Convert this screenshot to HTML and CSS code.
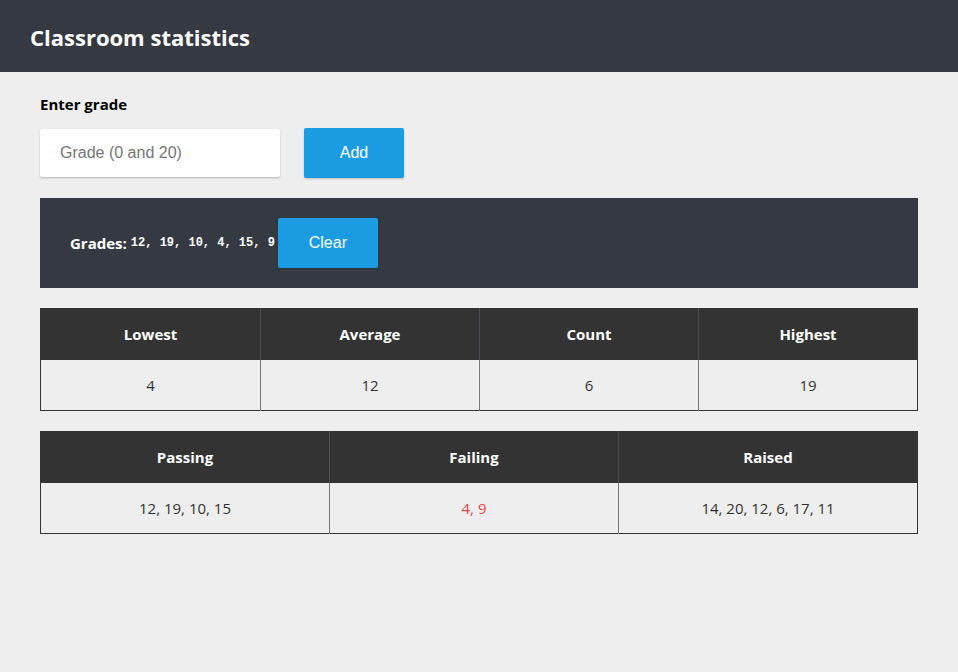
FILE: index.html
```html
<!DOCTYPE html>
<html lang="en">
<head>
<meta charset="utf-8">
<title>Classroom statistics</title>
<link rel="stylesheet" href="styles.css">
</head>
<body>
<header class="topbar">
  <h1 class="title">Classroom statistics</h1>
</header>
<main class="content">
  <label class="field-label" for="grade">Enter grade</label>
  <div class="entry-row">
    <input id="grade" class="grade-input" type="text" placeholder="Grade (0 and 20)">
    <button class="btn">Add</button>
  </div>
  <section class="grades-panel">
    <span class="grades-label">Grades:</span>
    <code class="grades-list">12, 19, 10, 4, 15, 9</code>
    <button class="btn">Clear</button>
  </section>
  <table class="stats">
    <thead>
      <tr><th class="q-wide">Lowest</th><th class="q-mid">Average</th><th class="q-mid">Count</th><th>Highest</th></tr>
    </thead>
    <tbody>
      <tr><td>4</td><td>12</td><td>6</td><td>19</td></tr>
    </tbody>
  </table>
  <table class="stats">
    <thead>
      <tr><th class="third">Passing</th><th class="third">Failing</th><th>Raised</th></tr>
    </thead>
    <tbody>
      <tr><td>12, 19, 10, 15</td><td class="failing">4, 9</td><td>14, 20, 12, 6, 17, 11</td></tr>
    </tbody>
  </table>
</main>
</body>
</html>
```
FILE: styles.css
```css
* { box-sizing: border-box; }
html, body { margin: 0; }
body {
  background: #eeeeee;
  font-family: "Open Sans", "Noto Sans", sans-serif;
  color: #333;
  font-size: 15px;
}
.topbar {
  height: 72px;
  background: #353a42;
  display: flex;
  align-items: center;
  padding: 2px 30px 0;
}
.title {
  margin: 0;
  color: #fff;
  font-size: 22px;
  font-weight: 700;
}
.content {
  padding: 0 40px 40px;
}
.field-label {
  display: block;
  font-weight: 700;
  color: #000;
  font-size: 15px;
  line-height: 20px;
  margin-top: 22px;
}
.entry-row {
  display: flex;
  align-items: center;
  gap: 24px;
  margin-top: 14px;
}
.grade-input {
  width: 240px;
  height: 48px;
  border: none;
  border-radius: 2px;
  background: #fff;
  box-shadow: 0 1px 2px rgba(0,0,0,0.25);
  padding: 0 20px;
  font-family: "Liberation Sans", Arial, sans-serif;
  font-size: 16px;
  color: #333;
  outline: none;
}
.grade-input::placeholder { color: #757575; }
.btn {
  width: 100px;
  height: 50px;
  border: none;
  border-radius: 2px;
  background: #1b9ce2;
  color: #fff;
  font-family: "Liberation Sans", Arial, sans-serif;
  font-size: 16px;
  box-shadow: 0 1px 2px rgba(0,0,0,0.2);
  cursor: pointer;
}
.grades-panel {
  margin-top: 20px;
  background: #353a42;
  padding: 20px 30px;
  display: flex;
  align-items: center;
  color: #fff;
}
.grades-label {
  font-weight: 700;
  font-size: 15px;
}
.grades-list {
  font-family: "Liberation Mono", monospace;
  font-weight: 700;
  font-size: 12px;
  margin-left: 4px;
  margin-right: 3px;
}
.stats {
  width: 100%;
  margin-top: 20px;
  border-collapse: collapse;
  border: 1px solid #333;
  table-layout: fixed;
}
.stats th {
  background: #333333;
  color: #fff;
  font-weight: 700;
  font-size: 15px;
  height: 51px;
  border-left: 1px solid #4a4f57;
  padding: 0;
}
.stats th.q-wide { width: 220px; }
.stats th.q-mid { width: 219px; }
.stats th.third { width: 289px; }
.stats td {
  height: 51px;
  text-align: center;
  border-left: 1px solid #777;
  padding: 0;
  color: #333;
}
.stats th:first-child, .stats td:first-child { border-left: none; }
.stats td.failing { color: #f2433d; }
```
